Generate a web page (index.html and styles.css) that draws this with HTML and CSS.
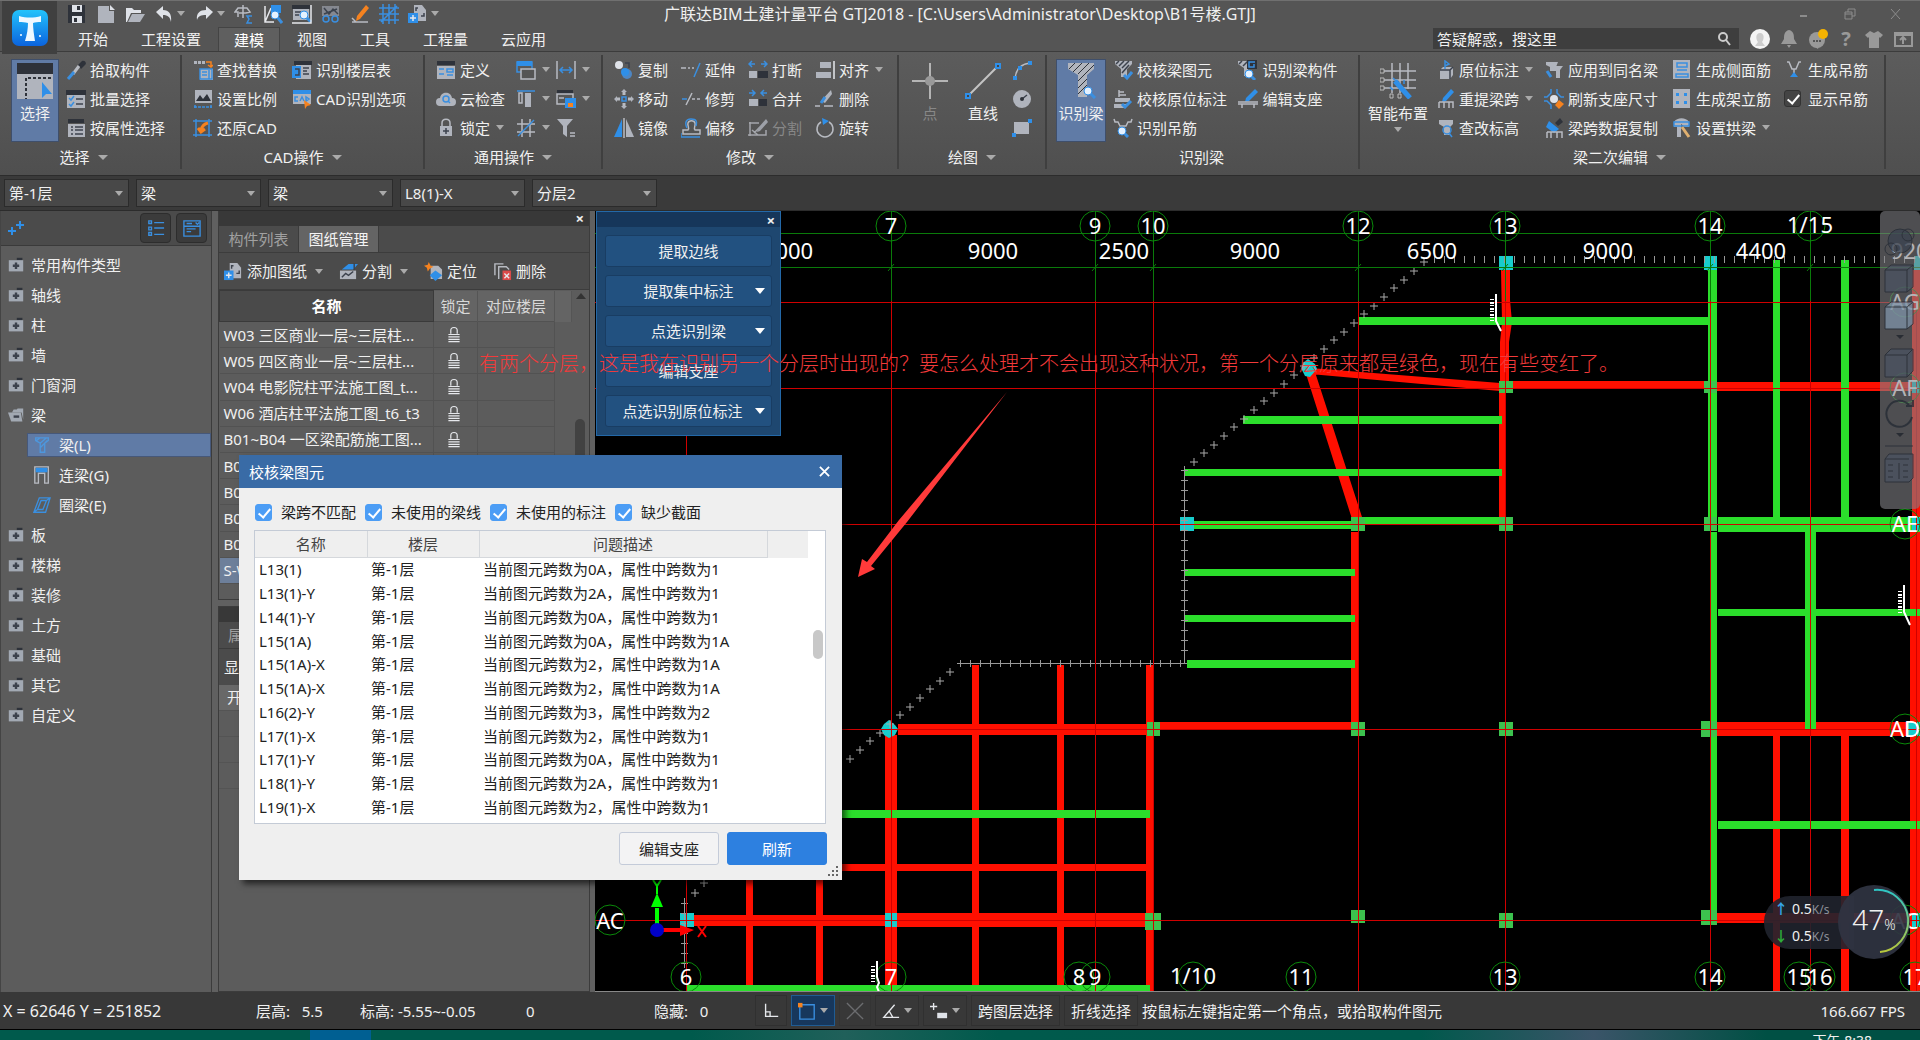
FILE: index.html
```html
<!DOCTYPE html>
<html lang="zh-CN">
<head>
<meta charset="utf-8">
<title>广联达BIM土建计量平台 GTJ2018</title>
<link rel="stylesheet" href="styles.css">
</head>
<body>
<svg class="sprite" aria-hidden="true">
  <symbol id="save" viewBox="0 0 20 20"><path class="d" d="M1 1h17v18H1z"/><path class="w" d="M5 1h10v7H5zM5 12h10v7H5z"/><path class="d" d="M10 2h3v4h-3zM7 14h3v4H7z"/></symbol>
  <symbol id="new" viewBox="0 0 20 20"><path class="g" d="M2 2h11v5h5v12H2z"/><path class="w" d="M14 1l5 5h-5z"/></symbol>
  <symbol id="open" viewBox="0 0 20 20"><path class="w" d="M1 4h6l2 2h7v3H6l-4 9H1z"/><path class="g" d="M7 10h13l-5 8H3z"/></symbol>
  <symbol id="undo" viewBox="0 0 20 20"><path class="w" d="M2 8l7-6v4c6 0 9 4 8 12-1-5-3-7-8-7v4z"/></symbol>
  <symbol id="redo" viewBox="0 0 20 20"><path class="w" d="M19 8l-7-6v4C6 6 2 9 3 16c1-4 4-5 9-5v4z"/></symbol>
  <symbol id="sum" viewBox="0 0 20 20"><path class="gs" d="M9 1v13M4 13V8H1l3-4h9l3 4-4 1H5"/><path class="bs" d="M18 12h-5l2 3-2 4h5"/></symbol>
  <symbol id="findv" viewBox="0 0 20 20"><path class="ws" d="M2 2v16h9M2 18L8 4"/><path class="b" d="M8 1h10v8H8z"/><circle class="lens" cx="12" cy="11" r="4"/><path class="bs3" d="M15 14l4 5"/></symbol>
  <symbol id="findw" viewBox="0 0 20 20"><path class="d" d="M0 1h18v4H0z"/><path class="g" d="M1 5h16v11H1z"/><path class="ds" d="M3 8h6M3 11h4"/><circle class="lens" cx="12" cy="11" r="4"/><path class="bs3" d="M15 14l4 4"/><path class="ws" d="M0 19h19V1"/></symbol>
  <symbol id="glass" viewBox="0 0 20 20"><path class="m" d="M1 2h17v10H1z"/><path class="ds" d="M3 4l5 6 4-5 5 5M3 10l13-5"/><circle class="bs" cx="5" cy="15" r="3"/><circle class="bs" cx="14" cy="15" r="3"/></symbol>
  <symbol id="pen" viewBox="0 0 20 20"><path class="o" d="M16 1l3 3-9 11-4 2 1-5z"/><path class="gs" d="M2 18h16M2 14l4 4"/></symbol>
  <symbol id="grid" viewBox="0 0 20 20"><path class="bs" d="M4 0v20M10 0v20M16 0v20M0 4h20M0 10h20M0 16h20M2 18L18 2"/></symbol>
  <symbol id="addsheet" viewBox="0 0 20 20"><path class="g" d="M6 1h8l4 5v11H6z"/><path class="ds" d="M10 4H8v3M13 12h3V9"/><path class="b" d="M0 9h10v10H0z"/><path class="ws" d="M5 11v6M2 14h6"/></symbol>
  <symbol id="dropper" viewBox="0 0 20 20"><path class="d" d="M12 5l4-4c3-1 5 2 3 4l-4 4z"/><path class="gs3" d="M13 6l-6 8"/><path class="bs3" d="M8 12l-6 7"/></symbol>
  <symbol id="batch" viewBox="0 0 20 20"><path class="d" d="M0 1h20v5H0z"/><path class="g" d="M1 6h18v13H1z"/><path class="bs" d="M3 9l2 2 3-4M3 15l2 2 3-4"/><path class="ds" d="M10 10h7M10 15h7"/></symbol>
  <symbol id="byprop" viewBox="0 0 20 20"><path class="d" d="M2 1h16v4H2z"/><path class="g" d="M2 6h17v13H2z"/><path class="ds" d="M5 9h2M9 9h8M5 12h2M9 12h8M5 16h2M9 16h8"/></symbol>
  <symbol id="replace" viewBox="0 0 20 20"><path class="g" d="M1 1h3v3H1zM5 1h3v3H5zM9 1h3v3H9zM7 9h13v11H7z"/><path class="os" d="M13 2h5v5M15 5l3 2 2-2"/><path class="bs" d="M7 9h12v10H7zM9 12h5M9 15h5M16 10v9"/></symbol>
  <symbol id="scale" viewBox="0 0 20 20"><path class="g" d="M2 1h17v13H2z"/><path class="d" d="M3 12l4-6 3 4 4-5 4 7z"/><path class="bs" d="M1 18h18M2 16v4M18 16v4" stroke-dasharray="3 1"/></symbol>
  <symbol id="restore" viewBox="0 0 20 20"><path class="bs" d="M3 1v18M16 1v18M0 3h19M0 17h19"/><path class="os3" d="M8 12c1-4 3-6 7-7M5 10l3 4 4-3"/></symbol>
  <symbol id="floor" viewBox="0 0 20 20"><path class="d" d="M2 1h18v4H2z"/><path class="g" d="M4 5h15v14H4z"/><path class="b" d="M0 6h9v12H0z"/><path class="ds" d="M11 8h6M11 11h4M11 14h6M3 9h4v6H3"/></symbol>
  <symbol id="cadopt" viewBox="0 0 20 20"><path class="b" d="M1 1h18v4H1z"/><path class="g" d="M1 5h18v10H1z"/><path class="bs" d="M6 8H3v4h3M8 12l2-4 2 4M14 8v4l3-2z"/><path class="o" d="M12 11l7 5-4 1-2 3z"/></symbol>
  <symbol id="define" viewBox="0 0 20 20"><path class="d" d="M1 1h18v4H1z"/><path class="g" d="M1 6h18v13H1z"/><path class="bs" d="M3 9h5M11 9h6v3h-6zM3 14h5M11 15h6"/></symbol>
  <symbol id="cloud" viewBox="0 0 20 20"><path class="g" d="M4 17a4 4 0 010-8c1-7 11-7 12 0a4 4 0 010 8z"/><circle class="bs" cx="10" cy="10" r="3"/><path class="bs" d="M12 12l2 2"/></symbol>
  <symbol id="lock" viewBox="0 0 20 20"><path class="gs" d="M6 8V5c0-5 8-5 8 0v3"/><path class="g" d="M4 8h12v10H4z"/><path class="ds" d="M10 10v6M7 13h6"/></symbol>
  <symbol id="layers" viewBox="0 0 20 20"><path class="bs" d="M1 2h15v10H1z"/><path class="b" d="M1 1h15v5H1z"/><path class="bar" d="M5 9h14v10H5z"/><path class="gs" d="M5 9h14v10H5z"/></symbol>
  <symbol id="hspan" viewBox="0 0 20 20"><path class="gs" d="M1 1v18M19 1v18"/><path class="bs" d="M4 10h12M7 7l-3 3 3 3M13 7l3 3-3 3"/></symbol>
  <symbol id="cols" viewBox="0 0 20 20"><path class="bs" d="M1 2h18"/><path class="gs" d="M3 4h3v10H3z"/><path class="g" d="M9 4h6v14H9z"/></symbol>
  <symbol id="savewin" viewBox="0 0 20 20"><path class="d" d="M1 1h16v4H1z"/><path class="gs" d="M1 5h16v10H1zM3 9h5"/><path class="b" d="M9 9h11v10H9z"/><path class="o" d="M12 14h5v4h-5z"/></symbol>
  <symbol id="hash" viewBox="0 0 20 20"><path class="gs" d="M6 1v18M14 1v18M1 6h18M1 14h18"/><path class="bs" d="M2 18L18 2"/></symbol>
  <symbol id="filter" viewBox="0 0 20 20"><path class="g" d="M1 1h16l-6 7v11l-4-3V8z"/><path class="gs" d="M14 15h5M14 18h5"/></symbol>
  <symbol id="copy" viewBox="0 0 20 20"><circle class="w" cx="5" cy="5" r="4"/><path class="ds" d="M11 3h4v5"/><circle cx="13" cy="14" r="5" fill="#4d86c4"/><circle class="b" cx="11" cy="12" r="4"/></symbol>
  <symbol id="move" viewBox="0 0 20 20"><path class="gs3" d="M10 2v4M10 14v4M2 10h4M14 10h4"/><path class="g" d="M10 0l3 3H7zM10 20l3-3H7zM0 10l3-3v6zM20 10l-3-3v6z"/><path class="bs" d="M8 8h4v4H8z"/></symbol>
  <symbol id="mirror" viewBox="0 0 20 20"><path class="b" d="M8 1v18H0z"/><path class="g" d="M12 1v18h8z"/><path class="gs" d="M10 0v20"/></symbol>
  <symbol id="extend" viewBox="0 0 20 20"><path class="gs" d="M0 8h5M7 8h2M11 8h2"/><path class="bs" d="M13 17l6-14"/></symbol>
  <symbol id="trim" viewBox="0 0 20 20"><path class="bs" d="M1 10h5"/><path class="gs" d="M5 16l6-12M11 10h3M16 10h3"/></symbol>
  <symbol id="offset" viewBox="0 0 20 20"><path class="gs" d="M2 16h17v-4h-5c-2-2 1-4 0-7-1-3-6-3-7 0-1 3 2 5 0 7H2z"/><path class="bs" d="M0 15v4h19M6 10c-2-4-2-9 4-9s6 3 5 7"/></symbol>
  <symbol id="break" viewBox="0 0 20 20"><path class="g" d="M1 11h8v7H1z"/><path class="d" d="M10 11h10v7H10z"/><path class="bs" d="M1 4h6M4 1L1 4l3 3M13 4h6M16 1l3 3-3 3"/></symbol>
  <symbol id="merge" viewBox="0 0 20 20"><path class="g" d="M1 10h9v7H1z"/><path class="d" d="M11 10h8v7h-8z"/><path class="bs" d="M1 4h6M4 1l3 3-3 3M13 4h6M16 1l-3 3 3 3"/></symbol>
  <symbol id="split" viewBox="0 0 20 20"><path class="gs" d="M1 5h10M2 4v14M0 17h18v-5M6 15l5-5M4 12l6 5"/><path class="g" d="M18 1l2 3-8 9-3 1 1-4z"/></symbol>
  <symbol id="align" viewBox="0 0 20 20"><path class="g" d="M5 2h11v6H5zM1 12h15v6H1z"/><path class="ws" d="M19 1v18"/></symbol>
  <symbol id="erase" viewBox="0 0 20 20"><path class="g" d="M16 1l1 4-7 9-4-2z"/><path class="bs3" d="M10 8l-4 6"/><path class="gs" d="M0 17h5M9 17h9"/></symbol>
  <symbol id="rotate" viewBox="0 0 20 20"><path class="gs" d="M14 4a8 8 0 11-8 0"/><path class="b" d="M7 0l7 3-6 4z"/></symbol>
  <symbol id="arc" viewBox="0 0 20 20"><path class="gs" d="M3 18C4 9 9 4 18 3"/><path class="b" d="M1 16h4v4H1zM16 1h4v4h-4zM6 6h4v4H6z"/></symbol>
  <symbol id="circ" viewBox="0 0 20 20"><circle class="g" cx="10" cy="10" r="9"/><path class="ds" d="M10 10l5-4"/><circle class="d" cx="10" cy="10" r="2"/></symbol>
  <symbol id="rect" viewBox="0 0 20 20"><path class="g" d="M2 4h15v12H2z"/><path class="b" d="M16 1h4v4h-4zM0 15h4v4H0z"/></symbol>
  <symbol id="beamok" viewBox="0 0 20 20"><path class="g" d="M2 1h17v3l-5 5v8H8V9L2 4z"/><path class="ds" d="M3 4l3-3M6 6l5-5M9 8l7-7M9 13l7-8"/><path class="bs3" d="M11 15l3 3 5-6"/></symbol>
  <symbol id="origok" viewBox="0 0 20 20"><path class="gs" d="M6 1v7M6 3h5M6 6h7"/><path class="g" d="M2 9h15v4H2zM1 15h12v4H1z"/><path class="bs3" d="M9 15l3 3 6-6"/></symbol>
  <symbol id="hook" viewBox="0 0 20 20"><path class="gs" d="M1 1l1 3h3l2 4h6l2-4h3l1-3"/><circle class="lens" cx="9" cy="13" r="4"/><path class="bs3" d="M12 16l3 3"/></symbol>
  <symbol id="beamcomp" viewBox="0 0 20 20"><path class="g" d="M0 1h14v4l-4 3v8H6V8L0 4z"/><path class="ds" d="M1 4l3-3M5 6l5-5"/><path class="d" d="M9 0h10v9H9z"/><path class="bs" d="M17 2h-6v5h5V4"/><circle class="lens" cx="11" cy="14" r="4"/><path class="bs3" d="M14 17l3 3"/></symbol>
  <symbol id="support" viewBox="0 0 20 20"><path class="b" d="M17 0l3 3-9 9-4 1 1-4z"/><path class="gs" d="M0 13h20M0 15h20M4 15v4M16 15v4"/></symbol>
  <symbol id="origin" viewBox="0 0 20 20"><path class="g" d="M5 10l3-3h10v8l-3 4H5z"/><path class="ds" d="M5 10h10v9M15 10l3-3"/><path class="bs" d="M10 9V1l4 3-4 2"/></symbol>
  <symbol id="respan" viewBox="0 0 20 20"><path class="b" d="M16 0l3 3-8 9-4 1 1-4z"/><path class="gs" d="M4 13h14v6M9 13v6M14 13v6M4 13v6"/></symbol>
  <symbol id="elev" viewBox="0 0 20 20"><path class="g" d="M4 2h14v4l-3 3v8H9V9L4 6z"/><circle class="bs" cx="12" cy="12" r="4"/><path class="bs" d="M14 15l3 4"/></symbol>
  <symbol id="apply" viewBox="0 0 20 20"><path class="g" d="M2 2h12l-2 5v4H6V7L2 5zM8 6h11l-3 4v8h-4v-8z"/><path class="bs3" d="M3 11l4 6"/></symbol>
  <symbol id="refresh" viewBox="0 0 20 20"><path class="bs" d="M7 0v4L3 8H0M13 0v4l4 4h3M7 20v-4l-4-4H0"/><circle class="w" cx="10" cy="10" r="4"/><path class="o" d="M15 11l5 4-5 5-4-4z"/></symbol>
  <symbol id="spancopy" viewBox="0 0 20 20"><path class="d" d="M16 0l3 4-5 4-3-3z"/><path class="b" d="M5 3l10 8-5 4L2 9z"/><path class="gs" d="M3 14h15v6M7 14v6M13 14v6M3 14v6"/></symbol>
  <symbol id="side" viewBox="0 0 20 20"><path class="g" d="M1 0h17v19H1z"/><path class="bs" d="M5 3h10v4H5zM5 10h10M4 14h12v3H4z"/></symbol>
  <symbol id="erect" viewBox="0 0 20 20"><path class="g" d="M1 0h17v19H1z"/><path class="b" d="M4 4h3v3H4zM12 4h3v3h-3zM4 12h3v3H4zM12 12h3v3h-3z"/></symbol>
  <symbol id="arch" viewBox="0 0 20 20"><path class="g" d="M2 4c3-5 12-5 15 0v5h-4L9 6v13H5V9H2z"/><path class="bs" d="M2 4h15v4H2z"/><path class="cs3" d="M10 9l7 10"/></symbol>
  <symbol id="genhook" viewBox="0 0 20 20"><path class="gs" d="M3 2h2l3 7h4l3-7h2M10 9v5"/><path class="b" d="M10 12l4 5H6z"/></symbol>
  <symbol id="folder" viewBox="0 0 20 20"><path class="d" d="M11 1h7v3h-7z"/><path class="f" d="M1 4h18v14H1z"/><path class="ds3" d="M10 7v8M6 11h8"/></symbol>
  <symbol id="folderopen" viewBox="0 0 20 20"><path class="f" d="M5 7l2-4h4l1-1h7v14l-2-9z"/><path class="f" d="M0 7h16l2 11H4z"/><path class="ds3" d="M7 12h7"/></symbol>
  <symbol id="beam" viewBox="0 0 20 20"><path class="ls" d="M3 2h14v3l-4 3v10H8V8L3 5zM4 5l4-3M8 8l7-6M8 13l8-8"/></symbol>
  <symbol id="lintel" viewBox="0 0 20 20"><path class="gs" d="M2 1h15v18h-4V8H6v11H2z"/><path class="b" d="M3 2h13v5H3z"/></symbol>
  <symbol id="ring" viewBox="0 0 20 20"><path class="bs" d="M7 2h12l-5 16H1zM9 5h6l-4 10H5zM19 2l-4 3M1 18l4-3"/></symbol>
  <symbol id="padlock" viewBox="0 0 20 20"><path class="ws" d="M6 9V5c0-5 8-5 8 0v4M3 10h14M3 13h14M3 16h14M3 19h14"/></symbol>
  <symbol id="splitsheet" viewBox="0 0 20 20"><path class="b" d="M3 8l7-6h10l-5 6z"/><path class="ds" d="M16 1v8"/><path class="g" d="M1 9h17v9H1z"/><path class="ds" d="M3 16l4-4 3 2 5-4"/></symbol>
  <symbol id="locate" viewBox="0 0 20 20"><path class="g" d="M7 4h8l4 4v10H7z"/><path class="o" d="M5 0l2 4 3 1-4 2-2 3-1-4-3-2 4-1z"/><path class="b" d="M12 9l7 5-7 6-6-6z"/></symbol>
  <symbol id="delsheet" viewBox="0 0 20 20"><path class="gs" d="M2 14V2h9M6 18V5h8l3 3"/><path fill="#dd4a4a" d="M10 9h9v10h-9z"/><path class="ws" d="M12 12l5 5M17 12l-5 5"/></symbol>
</svg>

<div class="app">
  <header class="top">
    <button class="logo" aria-label="菜单"><svg viewBox="0 0 36 36"><defs><linearGradient id="lg" x2="0" y2="1"><stop offset="0" stop-color="#22c3fb"/><stop offset="1" stop-color="#0b63de"/></linearGradient></defs><rect width="36" height="36" rx="7" fill="url(#lg)"/><path fill="#eef8ff" d="M7 6c7 2 15 2 22 0v6c-3 0-6 0-8 1 0 5 1 12 2 18H13c2-6 3-13 3-18-3-1-6-1-9-1z"/><circle cx="9" cy="25" r="1" fill="#fff"/><circle cx="28" cy="26" r="1" fill="#fff"/></svg></button>
    <div class="titlerow">
      <div class="qat">
        <button><svg><use href="#save"/></svg></button><button><svg><use href="#new"/></svg></button><button><svg><use href="#open"/></svg></button><button class="car"><svg><use href="#undo"/></svg></button><button class="car"><svg><use href="#redo"/></svg></button><button><svg><use href="#sum"/></svg></button><button><svg><use href="#findv"/></svg></button><button><svg><use href="#findw"/></svg></button><button><svg><use href="#glass"/></svg></button><button><svg><use href="#pen"/></svg></button><button><svg><use href="#grid"/></svg></button><button class="car"><svg><use href="#addsheet"/></svg></button>
      </div>
      <h1>广联达BIM土建计量平台 GTJ2018 - [C:\Users\Administrator\Desktop\B1号楼.GTJ]</h1>
      <div class="winctl"><button aria-label="最小化"><svg viewBox="0 0 14 14"><path d="M3 9h7" stroke-width="2"/></svg></button><button aria-label="还原"><svg viewBox="0 0 14 14"><path d="M2 5h7v7H2zM5 5V2h7v7H9M2 7h7"/></svg></button><button aria-label="关闭"><svg viewBox="0 0 14 14"><path d="M2 2l9 10M11 2L2 12"/></svg></button></div>
    </div>
    <div class="tabrow">
      <nav class="tabs"><button>开始</button><button>工程设置</button><button class="on">建模</button><button>视图</button><button>工具</button><button>工程量</button><button>云应用</button></nav>
      <div class="search"><input type="text" value="答疑解惑，搜这里" aria-label="搜索"><svg viewBox="0 0 16 16"><circle cx="7" cy="6" r="4"/><path d="M10 9l4 5"/></svg></div>
      <div class="usericons">
        <svg viewBox="0 0 20 20"><circle cx="10" cy="10" r="10" fill="#f3f3f3"/><path fill="#ccc" d="M10 4c5 0 4 7 2 9l3 4H5l3-4C6 11 5 4 10 4z"/></svg>
        <svg viewBox="0 0 20 20"><path d="M10 1c5 1 5 6 5 9l3 5H2l3-5c0-3 0-8 5-9zM8 16h4l-2 3z"/></svg>
        <svg viewBox="0 0 20 20"><circle cx="9" cy="11" r="8"/><path d="M7 18l3 2 1-3z"/><circle cx="15" cy="5" r="5" fill="#f5b301"/><path fill="#555" d="M5 11h2v2H5zM8 11h2v2H8zM11 11h2v2h-2z"/></svg>
        <span class="help">?</span>
        <svg viewBox="0 0 20 20"><path d="M6 2l4 2 4-2 5 4-3 3-1-1v11H5V8L4 9 1 6z"/></svg>
        <svg viewBox="0 0 20 20"><path fill="none" stroke="#999" stroke-width="2" d="M2 4h17v13H2zM2 4v2h17M10 15V9M7 11l3-3 3 3"/></svg>
      </div>
    </div>
  </header>

  <section class="ribbon">
    <div class="group g1">
      <div class="tools">
        <button class="big on"><svg viewBox="0 0 36 36"><path class="d" d="M0 0h36v11H0z"/><path class="g" d="M0 11h36v25H0z"/><path fill="none" stroke="#2e323a" stroke-width="2" stroke-dasharray="3 2" d="M34 15H9v21"/><path class="b" d="M25 19l10 12h-6l-4 4z"/></svg>选择</button>
        <div class="col"><button><svg><use href="#dropper"/></svg>拾取构件</button><button><svg><use href="#batch"/></svg>批量选择</button><button><svg><use href="#byprop"/></svg>按属性选择</button></div>
      </div>
      <button class="gname more">选择</button>
    </div>
    <div class="group g2">
      <div class="tools">
        <div class="col"><button><svg><use href="#replace"/></svg>查找替换</button><button><svg><use href="#scale"/></svg>设置比例</button><button><svg><use href="#restore"/></svg>还原CAD</button></div>
        <div class="col"><button><svg><use href="#floor"/></svg>识别楼层表</button><button><svg><use href="#cadopt"/></svg>CAD识别选项</button></div>
      </div>
      <button class="gname more">CAD操作</button>
    </div>
    <div class="group g3">
      <div class="tools">
        <div class="col"><button><svg><use href="#define"/></svg>定义</button><button><svg><use href="#cloud"/></svg>云检查</button><button class="more"><svg><use href="#lock"/></svg>锁定</button></div>
        <div class="col"><button class="more" aria-label="图层"><svg><use href="#layers"/></svg></button><button class="more" aria-label="对比"><svg><use href="#cols"/></svg></button><button class="more" aria-label="轴网"><svg><use href="#hash"/></svg></button></div>
        <div class="col"><button class="more" aria-label="测量"><svg><use href="#hspan"/></svg></button><button class="more" aria-label="存盘"><svg><use href="#savewin"/></svg></button><button aria-label="过滤"><svg><use href="#filter"/></svg></button></div>
      </div>
      <button class="gname more">通用操作</button>
    </div>
    <div class="group g4">
      <div class="tools">
        <div class="col"><button><svg><use href="#copy"/></svg>复制</button><button><svg><use href="#move"/></svg>移动</button><button><svg><use href="#mirror"/></svg>镜像</button></div>
        <div class="col"><button><svg><use href="#extend"/></svg>延伸</button><button><svg><use href="#trim"/></svg>修剪</button><button><svg><use href="#offset"/></svg>偏移</button></div>
        <div class="col"><button><svg><use href="#break"/></svg>打断</button><button><svg><use href="#merge"/></svg>合并</button><button class="off"><svg><use href="#split"/></svg>分割</button></div>
        <div class="col"><button class="more"><svg><use href="#align"/></svg>对齐</button><button><svg><use href="#erase"/></svg>删除</button><button><svg><use href="#rotate"/></svg>旋转</button></div>
      </div>
      <button class="gname more">修改</button>
    </div>
    <div class="group g5">
      <div class="tools">
        <button class="big off"><svg viewBox="0 0 36 36"><path stroke="#ccc" stroke-width="2" d="M18 0v36M0 18h36"/><circle cx="18" cy="18" r="5" fill="#aaa"/></svg>点</button>
        <button class="big"><svg viewBox="0 0 36 36"><path stroke="#c4c4c4" stroke-width="2" d="M3 33L33 3"/><path fill="#444" stroke="#2f8fe8" stroke-width="2" d="M1 31h4v4H1zM31 1h4v4h-4z"/></svg>直线</button>
        <div class="col"><button aria-label="弧"><svg><use href="#arc"/></svg></button><button aria-label="圆"><svg><use href="#circ"/></svg></button><button aria-label="矩形"><svg><use href="#rect"/></svg></button></div>
      </div>
      <button class="gname more">绘图</button>
    </div>
    <div class="group g6">
      <div class="tools">
        <button class="big on"><svg viewBox="0 0 36 36"><path class="g" d="M5 0h26v6l-7 6v22h-9V12L5 6z"/><path stroke="#2e323a" stroke-width="1" d="M6 6l6-6M10 9l9-9M15 11L26 0M15 18L31 2M15 25l9-9M15 31l9-9"/><circle class="lens" cx="25" cy="28" r="4"/><path class="bs3" d="M28 31l4 4"/></svg>识别梁</button>
        <div class="col"><button><svg><use href="#beamok"/></svg>校核梁图元</button><button><svg><use href="#origok"/></svg>校核原位标注</button><button><svg><use href="#hook"/></svg>识别吊筋</button></div>
        <div class="col"><button><svg><use href="#beamcomp"/></svg>识别梁构件</button><button><svg><use href="#support"/></svg>编辑支座</button></div>
      </div>
      <div class="gname">识别梁</div>
    </div>
    <div class="group g7">
      <div class="tools">
        <button class="big drop"><svg viewBox="0 0 36 36"><path class="gs" d="M12 0v30M20 0v30M28 0v26M3 8h33M3 17h33M3 25h33"/><path fill="#555" stroke="#bbb" d="M0 6h4v4H0zM0 15h4v4H0zM0 23h4v4H0zM10 31h3v4h-3zM18 31h3v4h-3z"/><path d="M15 18l15 17" stroke="#2f8fe8" stroke-width="5"/><path class="bs" d="M13 15l3 3M24 17v4M10 24l3 3"/></svg>智能布置</button>
        <div class="col"><button class="more"><svg><use href="#origin"/></svg>原位标注</button><button class="more"><svg><use href="#respan"/></svg>重提梁跨</button><button><svg><use href="#elev"/></svg>查改标高</button></div>
        <div class="col"><button><svg><use href="#apply"/></svg>应用到同名梁</button><button><svg><use href="#refresh"/></svg>刷新支座尺寸</button><button><svg><use href="#spancopy"/></svg>梁跨数据复制</button></div>
        <div class="col"><button><svg><use href="#side"/></svg>生成侧面筋</button><button><svg><use href="#erect"/></svg>生成架立筋</button><button class="more"><svg><use href="#arch"/></svg>设置拱梁</button></div>
        <div class="col"><button><svg><use href="#genhook"/></svg>生成吊筋</button><label><input type="checkbox" checked>显示吊筋</label></div>
      </div>
      <button class="gname more">梁二次编辑</button>
    </div>
  </section>

  <section class="combos">
    <span class="combo"><select aria-label="楼层"><option>第-1层</option></select></span>
    <span class="combo"><select aria-label="类别"><option>梁</option></select></span>
    <span class="combo"><select aria-label="构件类型"><option>梁</option></select></span>
    <span class="combo"><select aria-label="构件"><option>L8(1)-X</option></select></span>
    <span class="combo"><select aria-label="分层"><option>分层2</option></select></span>
  </section>

  <main class="work">
    <aside class="nav">
      <div class="navhead">
        <svg viewBox="0 0 16 16"><path d="M0 11h8M4 7v8M8 5h8M12 1v8" stroke="#2f8fe8" stroke-width="2"/></svg>
        <button aria-label="列表"><svg viewBox="0 0 20 20"><path class="bs" d="M2 2h3v3H2zM2 9h3v3H2zM2 15h3v3H2zM8 4h11M8 10h11M8 17h11"/></svg></button>
        <button aria-label="窗口"><svg viewBox="0 0 20 20"><path class="bs" d="M1 2h18v17H1zM1 8h18M4 5h6M14 4l2 2 2-2M4 11h10M4 14h5"/></svg></button>
      </div>
      <ul class="tree">
        <li><svg><use href="#folder"/></svg>常用构件类型</li>
        <li><svg><use href="#folder"/></svg>轴线</li>
        <li><svg><use href="#folder"/></svg>柱</li>
        <li><svg><use href="#folder"/></svg>墙</li>
        <li><svg><use href="#folder"/></svg>门窗洞</li>
        <li><svg><use href="#folderopen"/></svg>梁</li>
        <li class="sub on"><svg><use href="#beam"/></svg>梁(L)</li>
        <li class="sub"><svg><use href="#lintel"/></svg>连梁(G)</li>
        <li class="sub"><svg><use href="#ring"/></svg>圈梁(E)</li>
        <li><svg><use href="#folder"/></svg>板</li>
        <li><svg><use href="#folder"/></svg>楼梯</li>
        <li><svg><use href="#folder"/></svg>装修</li>
        <li><svg><use href="#folder"/></svg>土方</li>
        <li><svg><use href="#folder"/></svg>基础</li>
        <li><svg><use href="#folder"/></svg>其它</li>
        <li><svg><use href="#folder"/></svg>自定义</li>
      </ul>
    </aside>

    <aside class="side">
      <section class="pane drawings">
        <div class="panehead"><button aria-label="关闭">×</button></div>
        <div class="panetabs"><button>构件列表</button><button class="on">图纸管理</button></div>
        <div class="panebar"><button class="more"><svg><use href="#addsheet"/></svg>添加图纸</button><button class="more"><svg><use href="#splitsheet"/></svg>分割</button><button><svg><use href="#locate"/></svg>定位</button><button><svg><use href="#delsheet"/></svg>删除</button></div>
        <div class="sheets">
          <table>
            <thead><tr><th class="c1">名称</th><th class="c2">锁定</th><th class="c3">对应楼层</th><th></th></tr></thead>
            <tbody>
              <tr><td>W03 三区商业一层~三层柱...</td><td><svg><use href="#padlock"/></svg></td><td></td><td></td></tr>
              <tr><td>W05 四区商业一层~三层柱...</td><td><svg><use href="#padlock"/></svg></td><td></td><td></td></tr>
              <tr><td>W04 电影院柱平法施工图_t...</td><td><svg><use href="#padlock"/></svg></td><td></td><td></td></tr>
              <tr><td>W06 酒店柱平法施工图_t6_t3</td><td><svg><use href="#padlock"/></svg></td><td></td><td></td></tr>
              <tr><td>B01~B04 一区梁配筋施工图...</td><td><svg><use href="#padlock"/></svg></td><td></td><td></td></tr>
              <tr><td>B0</td><td></td><td></td><td></td></tr>
              <tr><td>B0</td><td></td><td></td><td></td></tr>
              <tr><td>B0</td><td></td><td></td><td></td></tr>
              <tr><td>B0</td><td></td><td></td><td></td></tr>
              <tr class="on"><td>S-W</td><td></td><td></td><td></td></tr>
            </tbody>
          </table>
          <div class="vbar"></div>
        </div>
      </section>
      <section class="pane props">
        <div class="panehead"></div>
        <div class="panetabs"><button>属</button></div>
        <div class="panebar">显</div>
        <div class="prow head">开</div>
        <div class="prow"></div>
        <div class="prow"></div>
        <div class="prow"></div>
      </section>
    </aside>

    <div class="canvas">
      <svg class="cad">
        <defs>
          <marker id="plus" markerUnits="userSpaceOnUse" markerWidth="10" markerHeight="10" refX="5" refY="5"><path d="M5 1v8M1 5h8" stroke="#aaa" stroke-width="1"/></marker>
        </defs>
        <g transform="translate(-595 -211)">
          <g fill="#ff0f00">
            <path d="M1501 270h9v30l2 22-3 20v40h-9v-40l2-20zM1499 392h7v126h-7zM1351 532h7v190h-7zM1773 735h7v257h-7zM1841 735h8v257h-8zM1912 270h8v254h-8zM1910 532h10v460h-10z"/>
            <path d="M1512 381h192v8h-192zM1717 382h203v9h-203zM1717 722h203v14h-203zM1717 913h203v10h-203zM1159 722h193v8h-193zM898 724h249v11H898zM842 864h308v7H842zM694 915h191v11H694zM897 913h249v14H897z"/>
            <path d="M885 735h12v257h-12zM972 665h7v327h-7zM1057 665h7v327h-7zM1146 665h7v327h-7zM746 880h7v112h-7zM816 880h7v112h-7z"/>
            <path d="M1310 368l190 15v8l-190-17zM1306 374l9-2 47 145-10 2z"/>
          </g>
          <g fill="#2bde2b">
            <path d="M1358 317h350v8h-350zM1243 416h259v8h-259zM1184 469h318v7h-318zM1184 521h167v8h-167zM1365 517h134v7h-134zM1718 517h202v15h-202zM1184 569h171v7h-171zM1184 615h171v7h-171zM1187 660h168v8h-168zM1718 609h202v7h-202zM1718 821h202v8h-202zM842 810h308v8H842zM686 985h464v6H686z"/>
            <path d="M1708 269h9v248h-9zM1711 532h6v381h-6zM1773 260h7v257h-7zM1841 260h8v257h-8zM1805 532h11v197h-11z"/>
          </g>
          <g fill="#3cc24e">
            <path d="M1351 517h14v14h-14zM1499 517h14v14h-14zM1499 381h14v12h-14zM1704 381h13v12h-13zM1704 517h13v14h-13zM1147 722h13v14h-13zM1351 722h14v14h-14zM1499 722h14v14h-14zM1701 721h16v16h-16zM1145 913h16v17h-16zM1351 910h14v13h-14zM1499 913h14v15h-14zM1701 910h16v15h-16z"/>
          </g>
          <g fill="#18cccc">
            <path d="M1499 256h14v14h-14zM1704 256h13v14h-13zM1180 517h14v14h-14zM680 913h14v14h-14zM885 913h12v14h-12zM1914 256h6v14h-6zM1912 381h8v12h-8zM1912 517h8v14h-8zM1908 722h12v14h-12zM1912 913h8v14h-8z"/>
            <path d="M1308 359l7 5 2 5-7 8-5-1-4-8 3-6zM889 720l6 5 3 4-3 6-6 3-5-3-3-6 3-5z"/>
          </g>
          <g fill="none" stroke="#999" stroke-width="1">
            <path d="M1184.500 466v197M957 663.500h230M684.500 898v70"/>
            <path d="M1184.500 470v190" stroke-width="7" stroke-dasharray="1 9"/>
            <path d="M960 663.500h225" stroke-width="7" stroke-dasharray="1 9"/>
            <path d="M684.500 903v62" stroke-width="7" stroke-dasharray="1 9"/>
            <path d="M1434 259.500h486" stroke-width="7" stroke-dasharray="1 9"/>
          </g>
          <polyline fill="none" marker-start="url(#plus)" marker-mid="url(#plus)" marker-end="url(#plus)" points="1424,262 1414,271 1404,280 1394,288 1384,297 1374,306 1364,314 1354,323 1344,332 1334,340 1324,349 1314,358 1304,366 1294,375 1284,384 1274,393 1264,401 1254,410 1244,419 1234,427 1224,436 1214,445 1204,453 1194,462"/>
          <polyline fill="none" marker-start="url(#plus)" marker-mid="url(#plus)" marker-end="url(#plus)" points="950,672 940,681 930,689 920,698 910,707 900,715 890,724 880,733 870,741 860,750 850,759"/>
          <polyline fill="none" marker-start="url(#plus)" marker-end="url(#plus)" points="704,883 695,893"/>
          <path fill="none" stroke="#d00000" d="M595 302.500h1325M595 388.500h1325M595 524.500h1325M595 729.500h1325M595 920.500h1325M686.500 301v691M891.500 301v691M1095.500 301v691M1153.500 301v691M1358.500 301v691M1505.500 301v691M1710.500 301v691M1810.500 301v691M1916.500 301v691"/>
          <path fill="none" stroke="#0a7a0a" d="M595 233.500h1325M595 267.500h1325M891.500 211v90M1095.500 211v90M1153.500 211v90M1358.500 211v90M1505.500 211v90M1710.500 211v90M1810.500 211v90M888 271l6-7M1092 271l6-7M1150 271l6-7M1355 271l6-7M1502 271l6-7M1707 271l6-7M1807 271l6-7"/>
          <g fill="none" stroke="#0a8a0a">
            <circle cx="891" cy="226" r="15"/><circle cx="1095" cy="226" r="15"/><circle cx="1153" cy="226" r="15"/><circle cx="1358" cy="226" r="15"/><circle cx="1505" cy="226" r="15"/><circle cx="1710" cy="226" r="15"/><circle cx="1810" cy="226" r="15"/>
            <circle cx="686" cy="977" r="15"/><circle cx="891" cy="977" r="15"/><circle cx="1079" cy="977" r="15"/><circle cx="1095" cy="977" r="15"/><circle cx="1193" cy="977" r="15"/><circle cx="1301" cy="977" r="15"/><circle cx="1505" cy="977" r="15"/><circle cx="1710" cy="977" r="15"/><circle cx="1799" cy="977" r="15"/><circle cx="1820" cy="977" r="15"/><circle cx="1915" cy="977" r="15"/>
            <circle cx="610" cy="920" r="15"/><circle cx="1905" cy="302" r="15"/><circle cx="1905" cy="388" r="15"/><circle cx="1905" cy="524" r="15"/><circle cx="1905" cy="729" r="15"/><circle cx="1905" cy="920" r="15"/>
          </g>
          <g class="lbl">
            <text x="891" y="234">7</text><text x="1095" y="234">9</text><text x="1153" y="234">10</text><text x="1358" y="234">12</text><text x="1505" y="234">13</text><text x="1710" y="234">14</text><text x="1810" y="233">1/15</text>
            <text x="788" y="259">9000</text><text x="993" y="259">9000</text><text x="1124" y="259">2500</text><text x="1255" y="259">9000</text><text x="1432" y="259">6500</text><text x="1608" y="259">9000</text><text x="1761" y="259">4400</text><text x="1916" y="259">9200</text>
            <text x="686" y="985">6</text><text x="891" y="985">7</text><text x="1079" y="985">8</text><text x="1095" y="985">9</text><text x="1193" y="984">1/10</text><text x="1301" y="985">11</text><text x="1505" y="985">13</text><text x="1710" y="985">14</text><text x="1799" y="985">15</text><text x="1820" y="985">16</text><text x="1915" y="985">17</text>
            <text x="610" y="929">AC</text><text x="1905" y="310">AG</text><text x="1905" y="396">AF</text><text x="1905" y="532">AE</text><text x="1905" y="737">AD</text><text x="1905" y="929">AC</text>
          </g>
          <g fill="none" stroke="#fff" stroke-width="2">
            <path d="M1496 294v27l5 10M1904 585v27l6 13M877 961v16l2 6-2 4 2 5"/>
            <path d="M1492 299v22M1900 591v22M873 966v16" stroke-width="4" stroke-dasharray="1 2 2 1"/>
          </g>
          <path d="M657 926V908" stroke="#0f0" stroke-width="4"/><path fill="#0f0" d="M657 893l6 14h-12z"/>
          <path d="M662 930h20" stroke="red" stroke-width="4"/><path fill="red" d="M694 930l-14-5v11z"/>
          <circle cx="657" cy="930" r="7" fill="#0000c8"/>
          <path fill="none" stroke="#0f0" stroke-width="2" d="M653 880l4 6 4-6M657 886v8"/><path fill="none" stroke="red" stroke-width="2" d="M698 926l8 11M706 926l-8 11"/>
        </g>
      </svg>

      <section class="extract">
        <div class="exhead"><button aria-label="关闭">×</button></div>
        <button>提取边线</button><button class="more">提取集中标注</button><button class="more">点选识别梁</button><button>编辑支座</button><button class="more">点选识别原位标注</button>
      </section>

      <div class="viewtools">
        <svg viewBox="0 0 40 298"><g fill="none" stroke="#232933" stroke-width="1"><circle cx="20" cy="30" r="12" fill="#3a4250"/><circle cx="28" cy="24" r="6"/><circle cx="11" cy="38" r="6"/><path fill="#4a5361" d="M5 59l6-5h22v22l-6 5H5zM5 59h22v22M27 59l6-5M5 144l6-6h22v22l-6 6H5zM5 144h22v22M27 144l6-6M5 248l4-5h24v24l-4 4H5zM5 248h24"/><path fill="#7f93a8" d="M5 96l6-5h22v22l-6 5H5zM5 96h22v22M27 96l6-5"/><path d="M5 235h28M19 252v16M8 254h5M8 260h5M8 266h5M23 254h5M23 260h5M23 266h5"/><path stroke-width="2" d="M29 194a13 13 0 10 3 12M26 195h7v-6"/></g><path fill="#1c2129" d="M16 124h8l-4 4zM16 222h8l-4 4z"/></svg>
      </div>

      <div class="meter">
        <div class="speeds"><span><b class="up">↑</b>0.5<small>K/s</small></span><span><b class="down">↓</b>0.5<small>K/s</small></span></div>
        <div class="ball"><svg viewBox="0 0 72 74"><path d="M36 5a31 31 0 016 62" fill="none" stroke="url(#ball)" stroke-width="2"/><defs><linearGradient id="ball" x2="0" y2="1"><stop offset="0" stop-color="#2ec4c4"/><stop offset="1" stop-color="#b8c83c"/></linearGradient></defs></svg><p>47<small>%</small></p></div>
      </div>
    </div>
  </main>

  <footer class="status">
    <div class="s1">X = 62646 Y = 251852</div><div class="s2">层高:&nbsp;&nbsp; 5.5</div><div class="s3">标高: -5.55~-0.05</div><div class="s4">0</div><div class="s5">隐藏:&nbsp;&nbsp; 0</div>
    <div class="snaps">
      <button aria-label="正交"><svg viewBox="0 0 20 20"><path class="ws" d="M4 2v14h14M4 11h5v5"/></svg></button>
      <button class="on more" aria-label="矩形选择"><svg viewBox="0 0 20 20"><path class="bs" d="M2 3h16v16H2z"/><path class="o" d="M0 1h5v5H0z"/></svg></button>
      <button class="dim" aria-label="相交"><svg viewBox="0 0 20 20"><path class="gs" d="M1 1l18 18M19 1L1 19"/></svg></button>
      <button class="more" aria-label="角度"><svg viewBox="0 0 20 20"><path class="ws" d="M14 3L2 17h17M8 10l4 7"/></svg></button>
      <button class="more" aria-label="偏移"><svg viewBox="0 0 20 20"><path class="ws" d="M4 1v8M0 5h8"/><path class="w" d="M8 12h11v6H8z"/></svg></button>
      <button>跨图层选择</button><button>折线选择</button>
    </div>
    <div>按鼠标左键指定第一个角点，或拾取构件图元</div>
    <div class="fps">166.667 FPS</div>
  </footer>
  <div class="taskbar"><i></i><time>下午 8:38</time></div>

  <section class="dialog" role="dialog" aria-label="校核梁图元">
    <header><span>校核梁图元</span><button aria-label="关闭"><svg viewBox="0 0 12 12"><path d="M1 1l10 10M11 1L1 11" stroke="#fff" stroke-width="2"/></svg></button></header>
    <div class="checks"><label><input type="checkbox" checked>梁跨不匹配</label><label><input type="checkbox" checked>未使用的梁线</label><label><input type="checkbox" checked>未使用的标注</label><label><input type="checkbox" checked>缺少截面</label></div>
    <div class="list">
      <table>
        <thead><tr><th class="d1">名称</th><th class="d2">楼层</th><th class="d3">问题描述</th><th></th></tr></thead>
        <tbody>
          <tr><td>L13(1)</td><td>第-1层</td><td colspan="2">当前图元跨数为0A，属性中跨数为1</td></tr>
          <tr><td>L13(1)-Y</td><td>第-1层</td><td colspan="2">当前图元跨数为2A，属性中跨数为1</td></tr>
          <tr><td>L14(1)-Y</td><td>第-1层</td><td colspan="2">当前图元跨数为0A，属性中跨数为1</td></tr>
          <tr><td>L15(1A)</td><td>第-1层</td><td colspan="2">当前图元跨数为0A，属性中跨数为1A</td></tr>
          <tr><td>L15(1A)-X</td><td>第-1层</td><td colspan="2">当前图元跨数为2，属性中跨数为1A</td></tr>
          <tr><td>L15(1A)-X</td><td>第-1层</td><td colspan="2">当前图元跨数为2，属性中跨数为1A</td></tr>
          <tr><td>L16(2)-Y</td><td>第-1层</td><td colspan="2">当前图元跨数为3，属性中跨数为2</td></tr>
          <tr><td>L17(1)-X</td><td>第-1层</td><td colspan="2">当前图元跨数为2，属性中跨数为1</td></tr>
          <tr><td>L17(1)-Y</td><td>第-1层</td><td colspan="2">当前图元跨数为0A，属性中跨数为1</td></tr>
          <tr><td>L18(1)-Y</td><td>第-1层</td><td colspan="2">当前图元跨数为2A，属性中跨数为1</td></tr>
          <tr><td>L19(1)-X</td><td>第-1层</td><td colspan="2">当前图元跨数为2，属性中跨数为1</td></tr>
        </tbody>
      </table>
      <div class="thumb"></div>
    </div>
    <div class="actions"><button>编辑支座</button><button class="primary">刷新</button></div>
    <svg class="grip" viewBox="0 0 12 12"><path fill="#666" d="M9 1h2v2H9zM9 5h2v2H9zM5 5h2v2H5zM1 9h2v2H1zM5 9h2v2H5zM9 9h2v2H9z"/></svg>
  </section>

  <p class="note">有两个分层，这是我在识别另一个分层时出现的？要怎么处理才不会出现这种状况，第一个分层原来都是绿色，现在有些变红了。</p>
  <svg class="notearrow" viewBox="0 0 150 187"><path fill="#ff3a3a" d="M149 1L41 129 9 171l-5-3-4 18 17-8-4-3 36-44z"/></svg>
</div>
</body>
</html>
```
FILE: styles.css
```css
* { box-sizing: border-box; }
body {
  margin: 0;
  font: 15px/20px "Noto Sans", "Noto Sans CJK SC", sans-serif;
  color: #f0f0f0;
  background: #3a3a3a;
}
button, input, select { font: inherit; color: inherit; border: 0; padding: 0; margin: 0; background: none; }
button { display: inline-flex; align-items: center; white-space: nowrap; }
h1, p, ul { margin: 0; padding: 0; }
svg { display: block; flex: none; }
.sprite { position: absolute; width: 0; height: 0; }

/* icon paints */
.g { fill: #b0b4bd; }
.m { fill: #858890; }
.f { fill: #a2a9b3; }
.w { fill: #dfe2e8; }
.d { fill: #2e323a; }
.b { fill: #2f8fe8; }
.o { fill: #f5821f; }
.bar { fill: #555; }
.gs, .ws, .ds, .bs, .os, .ls { fill: none; stroke-width: 1.5; }
.bs3, .gs3, .os3, .cs3, .ds3 { fill: none; stroke-width: 3; }
.gs, .gs3 { stroke: #b8bbc2; }
.ws { stroke: #e6e8ec; }
.ds, .ds3 { stroke: #3c424d; }
.bs, .bs3 { stroke: #3a8fe0; }
.os, .os3 { stroke: #f5821f; }
.cs3 { stroke: #e0b070; }
.ls { stroke: #4d97dd; }
.lens { fill: #e4f1ff; stroke: #2f8fe8; stroke-width: 1; }

.app { position: relative; display: flex; flex-direction: column; height: 100vh; overflow: hidden; }
.more::after, .car::after {
  content: ""; flex: none; margin-left: 8px;
  border: 4px solid transparent; border-top: 5px solid #aaa; border-bottom: 0;
}

/* title and tabs */
.top { position: relative; flex: none; background: #555; border-top: 1px solid #707070; border-bottom: 1px solid #3c3c3c; }
.logo { position: absolute; left: 2px; top: 0; width: 55px; height: 53px; background: #404040; z-index: 1; justify-content: center; }
.logo svg { width: 36px; height: 36px; }
.titlerow { display: grid; grid-template-columns: 1fr auto 1fr; align-items: center; height: 25px; }
.qat { display: flex; gap: 9px; padding-left: 67px; }
.qat svg { width: 20px; height: 20px; }
.car { width: 31px; }
.car::after { margin-left: 3px; }
h1 { font-size: 16px; line-height: 20px; font-weight: 400; white-space: nowrap; }
.winctl { display: flex; justify-content: flex-end; gap: 32px; padding-right: 17px; }
.winctl svg { width: 14px; height: 14px; fill: none; stroke: #8c8c8c; }
.tabrow { display: flex; align-items: flex-end; height: 25px; padding-left: 62px; }
.tabs { display: flex; gap: 1px; flex: 1; }
.tabs button { height: 24px; padding: 0 16px; }
.tabs .on { background: #5f5f5f; border: 1px solid #444; border-bottom: 0; padding: 0 15px; color: #fff; }
.search { display: flex; align-items: center; width: 306px; height: 21px; margin-bottom: 2px; padding: 0 7px 0 4px; background: #3e3e3e; }
.search input { flex: 1; min-width: 0; height: 21px; }
.search svg { width: 16px; height: 16px; fill: none; stroke: #ccc; stroke-width: 2; }
.usericons { display: flex; align-items: center; gap: 9px; width: 181px; padding: 0 7px 0 11px; height: 25px; }
.usericons svg { width: 20px; height: 20px; fill: #999; }
.help { width: 29px; text-align: center; font-size: 20px; font-weight: 700; color: #999; }

/* ribbon */
.ribbon { display: flex; flex: none; height: 123px; background: linear-gradient(#5c5c5c, #4f4f4f); overflow: hidden; }
.group { display: flex; flex-direction: column; flex: none; height: 114px; margin-top: 3px; border-right: 2px solid #3f3f3f; padding-left: 11px; }
.g1 { width: 182px; }
.g2 { width: 243px; }
.g3 { width: 178px; }
.g4 { width: 296px; }
.g5 { width: 148px; }
.g6 { width: 313px; padding-left: 9px; }
.g7 { width: 526px; padding-left: 6px; }
.tools { display: flex; height: 92px; }
.col { display: grid; grid-template-rows: repeat(3, 29px); align-content: start; }
.col button, .col label { display: flex; align-items: center; gap: 4px; }
.col svg { width: 20px; height: 20px; }
.col .more::after { margin-left: 2px; }
.big { flex-direction: column; width: 48px; height: 83px; margin: 4px 7px 0 0; padding-top: 3px; border: 1px solid transparent; gap: 4px; }
.big svg { width: 36px; height: 36px; }
.big.on { background: #607ba6; border-color: #3f4f6b; }
.g2 .col { width: 99px; }
.g3 .col { width: 40px; }
.g3 .col:first-child { width: 80px; }
.g4 .col { width: 67px; }
.g5 .big { margin-right: 5px; }
.g5 .tools { margin-left: -4px; }
.g6 .big { width: 53px; margin-right: 7px; }
.g6 .col { width: 127px; }
.g7 .big { width: 64px; margin-right: 5px; }
.g7 .col { width: 128px; }
.g7 .col:nth-child(2) { width: 109px; }
.g7 .col:last-child { width: 100px; margin-left: -16px; }
.drop::after { content: ""; border: 4px solid transparent; border-top: 5px solid #aaa; border-bottom: 0; }
.off { color: #888; }
.off svg { opacity: .8; }
.gname { align-self: center; margin-left: -11px; height: 20px; }
.gname::after { border-width: 5px 5px 0; }
.g1 .gname { margin-left: -24px; }
.ribbon input, .checks input { appearance: none; position: relative; width: 17px; height: 17px; border-radius: 3px; background: #444; border: 1px solid #333; }
.ribbon label { gap: 7px; }
input[type="checkbox"]::after { content: ""; position: absolute; left: 5px; top: 1px; width: 5px; height: 10px; border: solid #fff; border-width: 0 2px 2px 0; transform: rotate(40deg); }
.g6 .col:last-child { margin-left: 6px; }

/* selector row */
.combos { display: flex; flex: none; gap: 7px; height: 36px; padding: 3px 4px; background: #3a3a3a; border-top: 1px solid #2c2c2c; border-bottom: 1px solid #2c2c2c; }
.combo { position: relative; width: 125px; height: 28px; background: #484848; border: 1px solid #2b2b2b; }
.combo select { appearance: none; width: 100%; height: 25px; padding-left: 4px; }
.combo::after { content: ""; position: absolute; right: 5px; top: 11px; border: 4px solid transparent; border-top: 5px solid #aaa; border-bottom: 0; pointer-events: none; }

.work { display: flex; flex: 1; min-height: 0; background: #606060; }

/* component tree */
.nav { width: 212px; margin-right: 6px; background: #5c5c5c; border-right: 1px solid #3c3c3c; border-left: 1px solid #444; }
.navhead { display: flex; align-items: center; gap: 5px; height: 35px; padding: 0 4px 0 7px; background: #4b4b4b; border-bottom: 1px solid #3a3a3a; }
.navhead > svg { width: 16px; height: 16px; margin-right: auto; }
.navhead button { width: 31px; height: 30px; justify-content: center; background: #3b3b3b; border: 1px solid #2d2d2d; border-radius: 4px; }
.navhead button svg { width: 18px; height: 18px; }
.tree { display: grid; list-style: none; padding-top: 4px; }
.tree li { display: flex; align-items: center; gap: 7px; height: 30px; padding-left: 7px; }
.tree svg { width: 16px; height: 16px; }
.tree .sub { height: 24px; margin: 3px 0 3px 26px; padding-left: 6px; gap: 8px; }
.tree .sub svg { width: 18px; height: 20px; }
.tree .on { background: #607ba6; outline: 1px solid #46587a; outline-offset: -1px; }

/* drawings and properties */
.side { display: flex; flex-direction: column; gap: 6px; width: 372px; margin-right: 5px; }
.pane { background: #5c5c5c; border: 1px solid #3c3c3c; }
.drawings { height: 389px; border-top: 0; }
.props { flex: 1; }
.panehead { display: flex; justify-content: flex-end; height: 15px; background: #383838; padding-right: 5px; font-weight: 700; line-height: 15px; }
.panetabs { display: flex; height: 27px; background: #4b4b4b; border-bottom: 1px solid #3c3c3c; color: #a0a0a0; }
.panetabs button { width: 80px; justify-content: center; border-right: 1px solid #3c3c3c; }
.panetabs .on { background: #646464; color: #f4f4f4; }
.panebar { display: flex; align-items: center; gap: 16px; height: 36px; padding-left: 5px; background: #4b4b4b; }
.panebar button { gap: 4px; }
.panebar svg { width: 19px; height: 19px; }
.panebar .more::after { margin-left: 4px; }
.props .panetabs button { width: 60px; justify-content: flex-start; padding-left: 9px; border: 0; }
.prow { height: 26px; border-bottom: 1px solid #545454; }
.prow.head { padding: 2px 8px; background: #686868; }
.sheets { display: flex; height: 310px; border-top: 1px solid #3c3c3c; }
.sheets table { width: 353px; height: 294px; table-layout: fixed; border-collapse: collapse; }
.sheets th { height: 31px; padding: 0; background: #646464; border-right: 1px solid #555; font-weight: 400; color: #d8d8d8; }
.sheets .c1 { width: 214px; background: #4a4a4a; border: 1px solid #3a3a3a; font-weight: 700; color: #fff; }
.sheets .c2 { width: 44px; }
.sheets .c3 { width: 77px; }
.sheets td { padding: 0 0 0 4px; border: 1px solid #525252; border-left: 0; white-space: nowrap; }
.sheets td:last-child { border: 0; }
.sheets td svg { width: 16px; height: 17px; margin-left: 8px; }
.sheets .on td { background: #6d7f9a; }
.vbar { flex: 1; padding: 3px 3px 0; }
.vbar::before { content: ""; display: block; margin: 0 auto; width: 0; border: 5px solid transparent; border-top: 0; border-bottom: 6px solid #333; }
.vbar::after { content: ""; display: block; width: 10px; height: 60px; margin-top: 120px; border-radius: 5px; background: #424242; }

/* drawing area */
.canvas { position: relative; flex: 1; min-width: 0; overflow: hidden; background: #000; border-bottom: 1px solid #888; }
.cad { width: 100%; height: 100%; }
.lbl { font-size: 22px; fill: #fff; text-anchor: middle; }
.extract { position: absolute; left: 1px; top: 0; width: 185px; display: flex; flex-direction: column; gap: 8px; padding: 0 8px 8px; background: #1e4770; border: 1px solid #2368a8; }
.exhead { display: flex; justify-content: flex-end; height: 15px; margin: 0 -8px; padding-right: 5px; background: #16365a; font-weight: 700; }
.extract > button { position: relative; height: 32px; justify-content: center; background: #225180; border: 1px solid #193d63; border-radius: 3px; }
.extract > .more:last-child { padding-right: 12px; }
.extract > .more::after { position: absolute; right: 6px; border: 5px solid transparent; border-top: 6px solid #fff; border-bottom: 0; }
.viewtools { position: absolute; right: 0; top: 0; width: 40px; height: 298px; border-radius: 5px; background: rgba(130, 130, 135, .6); }
.viewtools svg { opacity: .75; }
.meter { position: absolute; right: 10px; bottom: 32px; display: flex; align-items: center; }
.speeds { display: flex; flex-direction: column; gap: 6px; width: 90px; height: 53px; margin-right: -16px; padding: 3px 0 0 10px; border-radius: 26px 0 0 26px; background: rgba(32, 35, 46, .9); font-size: 14px; }
.speeds b { display: inline-block; width: 18px; font-size: 14px; line-height: 18px; }
.speeds small { font-size: 12px; color: #8c8f98; }
.up { color: #35a6e6; }
.down { color: #2fae3a; }
.ball { display: flex; justify-content: center; align-items: center; position: relative; width: 72px; height: 74px; border-radius: 50%; background: rgba(48, 52, 66, .92); }
.ball svg { position: absolute; inset: 0; }
.ball p { font-size: 28px; font-weight: 300; }
.ball small { font-size: 14px; }

/* status */
.status { display: flex; align-items: center; flex: none; height: 37px; padding-left: 3px; background: #383838; }
.status > div { white-space: nowrap; }
.status .s1 { width: 253px; font-size: 16px; }
.status .s2 { width: 104px; }
.status .s3 { width: 166px; }
.status .s4 { width: 128px; }
.status .s5 { width: 101px; }
.snaps { display: flex; gap: 4px; margin-right: 4px; }
.snaps button { height: 31px; padding: 0 6px; border: 1px solid #303030; }
.snaps .more::after { margin-left: 4px; }
.snaps svg { width: 18px; height: 18px; }
.snaps .on { background: #17375c; border-color: #1f5c94; }
.snaps .dim { opacity: .4; }
.fps { margin-left: auto; padding-right: 15px; }
.taskbar { display: flex; flex: none; height: 11px; overflow: hidden; border-top: 1px solid #000; background: linear-gradient(90deg, #005a4c 0, #005a4c 36%, #20605a 44%, #005a4c 52%, #00594c 74%, #3a5468 83%, #005044 92%, #005044); }
.taskbar i { width: 61px; margin-left: 310px; background: #005f92; }
.taskbar time { margin-left: auto; margin-right: 48px; font-size: 14px; line-height: 22px; }

/* check dialog */
.dialog { position: absolute; left: 239px; top: 455px; width: 603px; background: #efefef; color: #222; box-shadow: 4px 4px 6px rgba(0, 0, 0, .6); }
.dialog header { display: flex; align-items: center; justify-content: space-between; height: 33px; padding: 0 12px 0 10px; background: #396ba6; color: #fff; }
.dialog header svg { width: 11px; height: 11px; }
.checks { display: flex; align-items: center; gap: 9px; height: 42px; padding: 6px 15px 0 16px; }
.checks label { display: flex; align-items: center; gap: 9px; white-space: nowrap; }
.checks input { background: #4c9df5; border-color: #4c9df5; }
.list { display: flex; margin: 0 16px 0 15px; height: 294px; background: #fff; border: 1px solid #c4cbd6; }
.list table { width: 553px; height: 288px; table-layout: fixed; border-collapse: collapse; }
.list th { height: 26px; padding: 0; background: #efefef; border-right: 1px solid #d5d8dc; border-bottom: 1px solid #d5d8dc; font-weight: 400; color: #444; }
.list th:last-child { border-color: #efefef; }
.list .d1, .list .d2 { width: 112px; }
.list .d3 { width: 288px; }
.list td { padding: 0 0 0 4px; white-space: nowrap; }
.thumb { width: 10px; height: 29px; margin: 99px 0 0 5px; border-radius: 5px; background: #c8c8c8; }
.actions { display: flex; justify-content: flex-end; gap: 8px; padding: 8px 15px 15px; }
.actions button { width: 100px; height: 33px; justify-content: center; border: 1px solid #c4cbd9; border-radius: 3px; background: #f3f3f4; }
.actions .primary { background: #2d80e0; border-color: #2d80e0; color: #fff; }
.grip { position: absolute; right: 3px; bottom: 3px; width: 12px; height: 12px; }

/* reader's remark over the window */
.note { position: absolute; left: 479px; top: 351px; font: 300 20px/24px "Noto Sans CJK SC", sans-serif; color: #f23a3a; white-space: nowrap; pointer-events: none; }
.notearrow { position: absolute; left: 858px; top: 391px; width: 150px; height: 187px; pointer-events: none; }
```
